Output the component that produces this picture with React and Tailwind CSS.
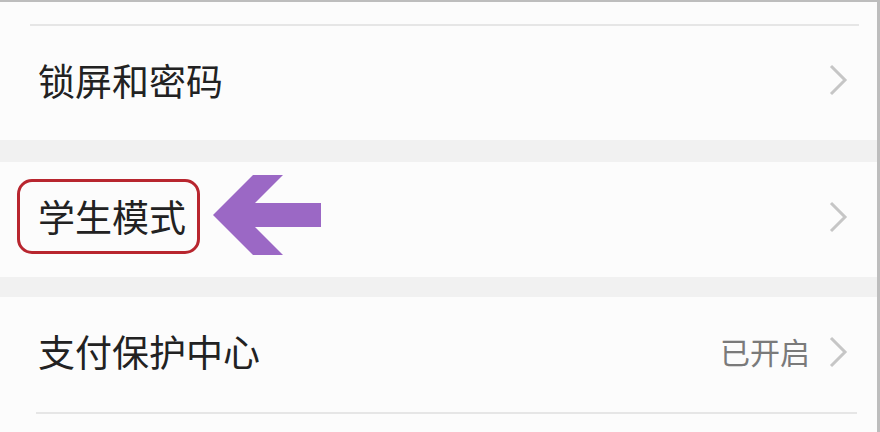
import React from "react";

const Chevron = () => (
  <svg width="20" height="32" viewBox="0 0 20 32" className="shrink-0">
    <polyline
      points="3,2 17,16 3,30"
      fill="none"
      stroke="#c6c6c6"
      strokeWidth="3"
      strokeLinejoin="miter"
    />
  </svg>
);

const Arrow = () => (
  <svg width="108" height="82" viewBox="0 0 108 82" className="ml-[13px] mb-[4px] shrink-0">
    <polygon
      points="0,41 40,1 70,1 42,29 108,29 108,53 42,53 70,81 40,81"
      fill="#9b68c5"
    />
  </svg>
);

const Row = ({ children, right, h = "h-[115px]" }) => (
  <div className={`${h} flex items-center justify-between pl-[38px] pr-[29px] pb-[6px]`}>
    <div className="flex items-center">{children}</div>
    <div className="flex items-center gap-[18px]">
      {right && <span className="text-[30px] text-[#7a7a7a]">{right}</span>}
      <Chevron />
    </div>
  </div>
);

export default function App() {
  return (
    <div
      className="w-[880px] h-[432px] overflow-hidden bg-[#fcfcfc] border-t-2 border-r-[3px] border-[#bdbdbd] text-[#222]"
      style={{ fontFamily: '"Noto Sans CJK SC", "Noto Sans", sans-serif' }}
    >
      <div className="h-[22px]" />
      <div className="ml-[30px] mr-[18px] h-[2px] bg-[#e6e6e6]" />

      {/* 锁屏和密码 */}
      <Row h="h-[114px]">
        <span className="text-[37px] leading-none">锁屏和密码</span>
      </Row>

      <div className="h-[22px] bg-[#f1f1f1]" />

      {/* 学生模式 */}
      <Row h="h-[115px]">
        <span className="-ml-[21px] h-[75px] flex items-center pl-[18px] pr-[11px] border-[3px] border-[#b8262f] rounded-[15px] text-[37px] leading-none">
          学生模式
        </span>
        <Arrow />
      </Row>

      <div className="h-[20px] bg-[#f1f1f1]" />

      {/* 支付保护中心 */}
      <Row right="已开启" h="h-[115px]">
        <span className="text-[37px] leading-none">支付保护中心</span>
      </Row>

      <div className="ml-[36px] mr-[20px] h-[2px] bg-[#e6e6e6]" />
    </div>
  );
}
